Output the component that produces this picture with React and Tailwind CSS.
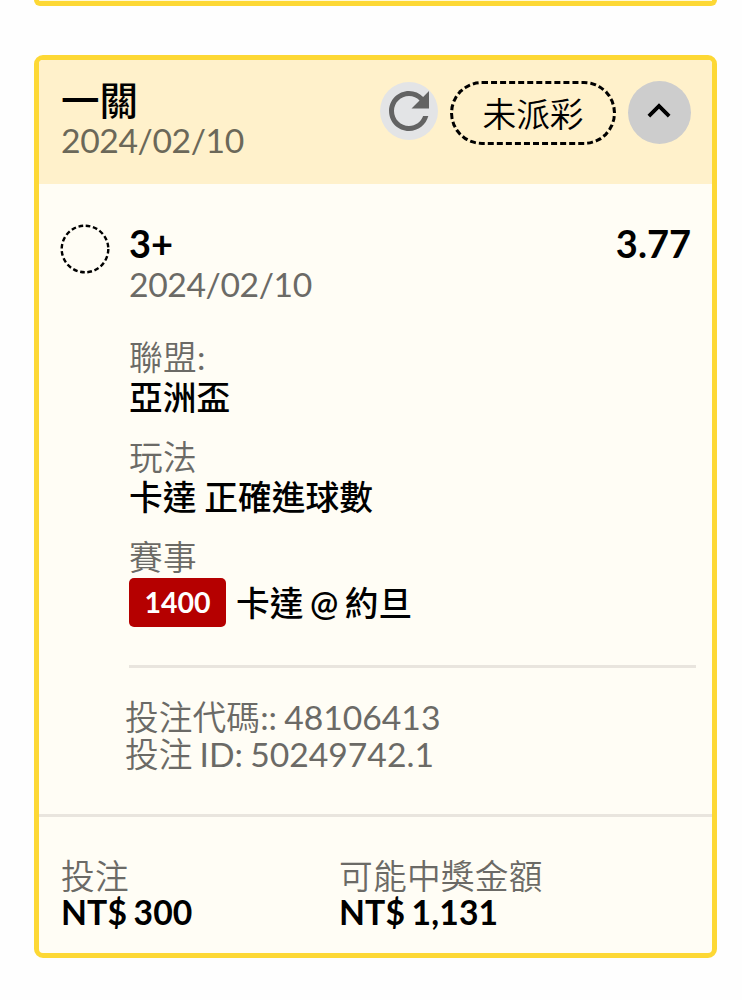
const BET = {
  title: '一關',
  date: '2024/02/10',
  status: '未派彩',
  pick: '3+',
  odds: '3.77',
  code: '48106413',
  id: '50249742.1',
};

const FOOTER = [
  { label: '投注', value: 'NT$ 300', width: 'w-[278px]' },
  { label: '可能中獎金額', value: 'NT$ 1,131', width: 'flex-1' },
];

function RefreshIcon() {
  return (
    <svg viewBox="0 0 24 24" className="-ml-px size-[60px] shrink-0 fill-[#636363]">
      <path d="M17.65 6.35C16.2 4.9 14.21 4 12 4c-4.42 0-7.99 3.58-7.99 8s3.57 8 7.99 8c3.73 0 6.84-2.55 7.73-6h-2.08c-.82 2.33-3.04 4-5.65 4-3.31 0-6-2.69-6-6s2.69-6 6-6c1.66 0 3.14.69 4.22 1.78L13 11h7V4l-2.35 2.35z" />
    </svg>
  );
}

function ChevronUpIcon() {
  return (
    <svg viewBox="0 0 24 24" className="-ml-px -mt-[3px] size-[46px] fill-black">
      <path d="M12 8l-6 6 1.41 1.41L12 10.83l4.59 4.58L18 14z" />
    </svg>
  );
}

function PendingRing() {
  return (
    <svg viewBox="0 0 50 50" className="mt-px size-[50px] shrink-0">
      <circle cx="25" cy="25" r="23.3" fill="none" stroke="#000" strokeWidth="2.4" strokeDasharray="4.7 2.621" />
    </svg>
  );
}

function Label({ children }) {
  return <div className="font-[350] tracking-[0.25px] text-[#6b6a66]">{children}</div>;
}

export default function App() {
  return (
    <div className="h-[1000px] overflow-hidden bg-[#fefefe] pl-[34px] pr-[25px] font-['Lato','Noto_Sans_CJK_TC',sans-serif] text-[33.7px] leading-9 text-black [word-spacing:-2px]">
      {/* Previous card */}
      <div className="h-[6px] rounded-b-[9px] border-x-[5px] border-b-[5px] border-[#fdd835] bg-[#fff9d8]" />

      <div className="mt-[49px] h-[903px] overflow-hidden rounded-[9px] border-[5px] border-[#fdd835] bg-[#fffdf5]">
        {/* Header */}
        <div className="flex h-[124px] items-start justify-between bg-[#fff1cb] pl-[22px] pr-[21px] pt-[21px]">
          <div>
            <div className="-mt-px text-[38.5px] font-medium leading-10">{BET.title}</div>
            <div className="mt-[2px] tracking-[-0.4px] text-[#6b6859]">{BET.date}</div>
          </div>
          <div className="flex">
            <button className="mt-px flex size-[58px] items-center justify-center rounded-full bg-[#e3e4e6]">
              <RefreshIcon />
            </button>
            <div className="ml-3 h-16 w-[166px] rounded-full border-[3px] border-dashed border-black text-center font-[350] leading-[61px]">
              {BET.status}
            </div>
            <button className="ml-3 flex size-[63px] items-center justify-center rounded-full bg-[#cdcdcd]">
              <ChevronUpIcon />
            </button>
          </div>
        </div>

        {/* Selection */}
        <div className="flex h-[630px] pl-[21px] pr-4 pt-[39px]">
          <PendingRing />
          <div className="ml-[19px] flex-1">
            <div className="flex justify-between pr-[5px] text-[38px] font-bold leading-10">
              <span>{BET.pick}</span>
              <span>{BET.odds}</span>
            </div>
            <div className="mt-[3px] tracking-[-0.4px] text-[#6b6a66]">{BET.date}</div>

            <div className="mt-[37px]">
              <Label>
                聯盟<span className="font-normal">:</span>
              </Label>
              <div className="mt-1 font-medium">亞洲盃</div>
            </div>
            <div className="mt-6">
              <Label>玩法</Label>
              <div className="mt-1 font-medium tracking-[0.1px] [word-spacing:-1px]">卡達 正確進球數</div>
            </div>
            <div className="mt-6">
              <Label>賽事</Label>
              <div className="mt-[3px] flex items-center">
                <span className="h-[49px] w-[97px] rounded-[5px] bg-[#b50000] text-center text-[28.5px] font-bold leading-[49px] text-white">
                  1400
                </span>
                <span className="ml-[10px] pt-px font-medium">
                  卡達 <span className="font-semibold">@</span> 約旦
                </span>
              </div>
            </div>

            <div className="mt-[38px] h-[3px] bg-[#e9e5de]" />

            <div className="-ml-1 mt-[31px] leading-[36.5px] text-[#6b6a66] [word-spacing:-1.5px]">
              <div>
                <span className="font-[350] tracking-[0.1px]">投注代碼</span>:: <span>{BET.code}</span>
              </div>
              <div>
                <span className="font-[350]">投注</span> ID: {BET.id}
              </div>
            </div>
          </div>
        </div>

        {/* Footer */}
        <div className="flex border-t-[3px] border-[#e9e5de] pl-[22px] pt-[41px]">
          {FOOTER.map((item) => (
            <div key={item.label} className={item.width}>
              <Label>{item.label}</Label>
              <div className="font-bold tracking-[0.15px]">{item.value}</div>
            </div>
          ))}
        </div>
      </div>
    </div>
  );
}
